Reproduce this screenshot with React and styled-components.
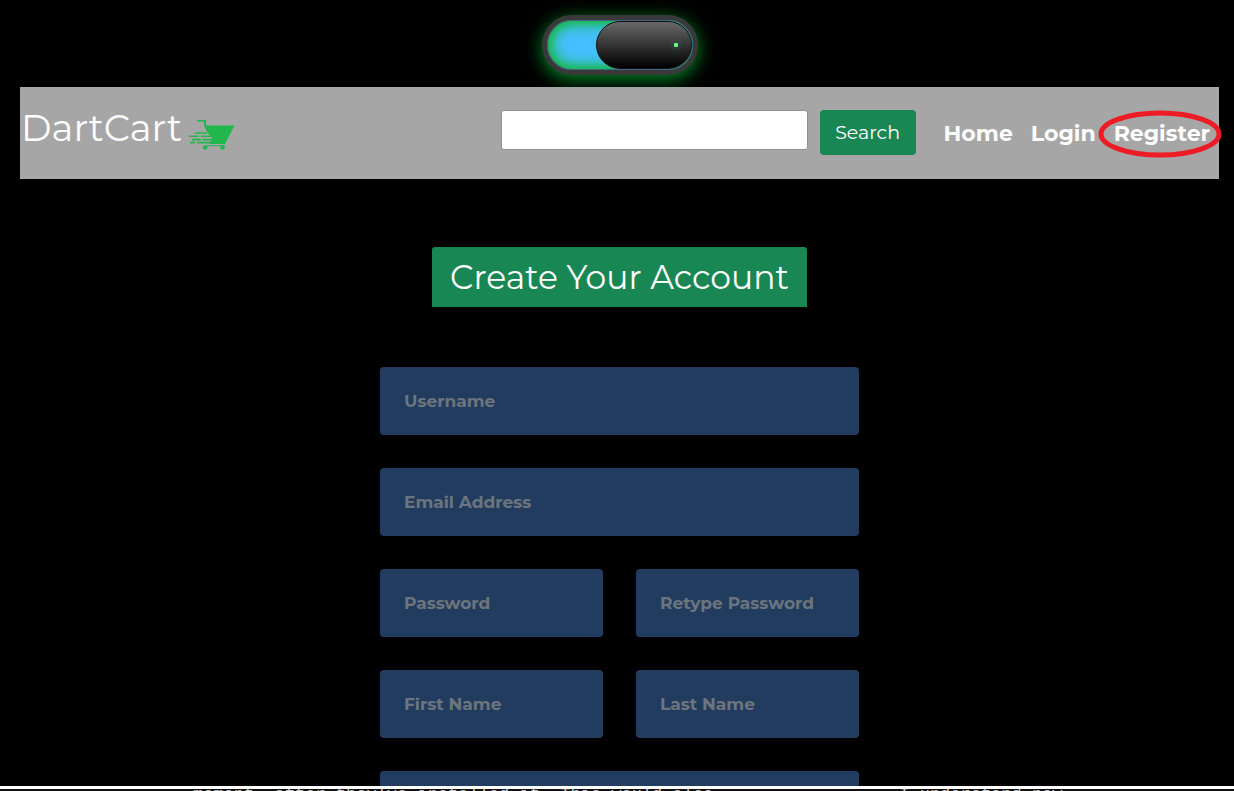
import React from "react";
import styled, { createGlobalStyle } from "styled-components";

const Global = createGlobalStyle`
  *, *::before, *::after { box-sizing: border-box; }
  body { margin: 0; background: #000; font-family: Montserrat, Inter, sans-serif; overflow: hidden; }
`;

const Page = styled.div`
  height: 100vh;
  display: flex;
  flex-direction: column;
  overflow: hidden;
`;

const Content = styled.div`
  flex: 1;
  min-height: 0;
  overflow: hidden;
  padding: 15px 15px 0 20px;
`;

const Switch = styled.label`
  display: block;
  position: relative;
  width: 156px;
  height: 60px;
  margin: 0 auto 12px;
  border-radius: 30px;
  border: 5px solid #393939;
  background: #45bfff;
  box-shadow: 0 4px 18px #008a26, inset 0 0 0 1px #41688a, inset 0 0 8px 2px #12b83c,
    inset 0 0 16px 4px #1fba55;
`;

const SwitchInput = styled.input`
  position: absolute;
  inset: 0;
  margin: 0;
  width: 100%;
  height: 100%;
  opacity: 0;
`;

const Knob = styled.span`
  position: absolute;
  top: 1px;
  right: 1px;
  bottom: 1px;
  width: 96px;
  border-radius: 24px;
  border: 1px solid #111;
  background: linear-gradient(#686868, #000);
`;

const Led = styled.span`
  position: absolute;
  top: 21px;
  right: 13px;
  width: 4px;
  height: 4px;
  border-radius: 1px;
  background: #65fb75;
  box-shadow: 0 0 6px #2d7aa5;
`;

const Header = styled.header`
  position: relative;
  z-index: 1;
  display: flex;
  align-items: flex-start;
  height: 92px;
  padding: 23px 9px 0 1px;
  background: #a6a6a6;
`;

const Brand = styled.a`
  display: flex;
  align-items: flex-start;
  gap: 7px;
  margin-right: auto;
  color: #fff;
  font-size: 37px;
  font-weight: 400;
  line-height: 36px;
  text-decoration: none;
`;

const CartSvg = styled.svg`
  width: 46px;
  height: 32px;
  margin-top: 9px;
`;

const SearchForm = styled.form`
  display: flex;
  align-items: flex-start;
  gap: 12px;
  margin-right: 28px;
`;

const SearchInput = styled.input`
  width: 307px;
  height: 40px;
  padding: 0 12px;
  border: 1px solid #8f8f9d;
  border-radius: 3px;
  background: #fff;
  font: inherit;
`;

const SearchButton = styled.button`
  width: 96px;
  height: 45px;
  padding: 0;
  border: 0;
  border-radius: 4px;
  background: #198754;
  color: #fff;
  font-family: inherit;
  font-size: 19px;
`;

const Nav = styled.nav`
  display: flex;
  gap: 18px;
`;

const NavLink = styled.a`
  position: relative;
  color: #fff;
  font-size: 22px;
  font-weight: 700;
  line-height: 48px;
  text-decoration: none;
`;

const Ring = styled.svg`
  position: absolute;
  left: -16px;
  top: 0;
  width: 124px;
  height: 48px;
`;

const Title = styled.h1`
  width: fit-content;
  margin: 68px auto 60px;
  padding: 1px 18px 0;
  border-radius: 3px 3px 0 0;
  background: #198754;
  color: #fff;
  font-size: 33px;
  font-weight: 400;
  line-height: 59px;
`;

const Form = styled.form`
  display: grid;
  grid-template-columns: 1fr 1fr;
  gap: 33px;
  width: 479px;
  margin: 0 auto;
`;

const Field = styled.input`
  grid-column: ${(p) => (p.$wide ? "1 / -1" : "auto")};
  width: 100%;
  min-width: 0;
  height: 68px;
  padding: 0 24px;
  border: 0;
  border-radius: 4px;
  background: #223c60;
  color: #fff;
  font-family: inherit;
  font-size: 17px;
  font-weight: 700;
  &::placeholder { color: #6c757d; opacity: 1; }
`;

const Strip = styled.footer`
  display: flex;
  gap: 186px;
  height: 5px;
  padding-left: 193px;
  border-top: 3px solid #fff;
  background: #111;
  color: #ccc;
  font-family: "Liberation Mono", monospace;
  font-size: 17px;
  line-height: 12px;
  overflow: hidden;
  white-space: nowrap;
`;

const fields = [
  { name: "Username", wide: true },
  { name: "Email Address", wide: true, type: "email" },
  { name: "Password", type: "password" },
  { name: "Retype Password", type: "password" },
  { name: "First Name" },
  { name: "Last Name" },
  { name: "Address", wide: true },
];

function Cart() {
  return (
    <CartSvg viewBox="0 0 46 32" aria-hidden="true">
      <g fill="#20b84d">
        <path d="M8 1h9v5.500h28.500L36 25H21l2-6-5-6L15 6.500V2.500H8z" />
        <path d="M6 13.200h12v1.600H6zM0 16.400h10v1.700H0zM12 16.400h14v1.700H12zM3 19.700h9v1.700H3zM13.500 19.700h12v1.700h-12zM1 22.800h5v1.800H1zM8 22.800h15v1.800H8z" />
        <path d="M17 26h19v1.300H19l-2 2h-2z" opacity=".8" />
        <circle cx="16" cy="28.500" r="2.200" />
        <circle cx="33.500" cy="28.500" r="2.200" />
      </g>
    </CartSvg>
  );
}

export default function App() {
  return (
    <>
      <Global />
      <Page>
        <Content>
          <Switch>
            <SwitchInput type="checkbox" role="switch" aria-label="Dark mode" defaultChecked />
            <Knob><Led /></Knob>
          </Switch>
          <Header>
            <Brand href="#">DartCart <Cart /></Brand>
            <SearchForm>
              <SearchInput type="search" aria-label="Search products" />
              <SearchButton type="button">Search</SearchButton>
            </SearchForm>
            <Nav>
              <NavLink href="#">Home</NavLink>
              <NavLink href="#">Login</NavLink>
              <NavLink href="#">
                Register
                <Ring viewBox="0 0 124 48" aria-hidden="true">
                  <ellipse cx="62" cy="24" rx="59" ry="21" fill="none" stroke="#ed1c24" strokeWidth="5" />
                </Ring>
              </NavLink>
            </Nav>
          </Header>
          <Title>Create Your Account</Title>
          <Form>
            {fields.map((f) => (
              <Field key={f.name} $wide={f.wide} type={f.type || "text"}
                placeholder={f.name === "Address" ? "" : f.name} aria-label={f.name} />
            ))}
          </Form>
        </Content>
        <Strip>
          <span>moment, after they've installed it. This would also</span>
          <span>I understand now</span>
        </Strip>
      </Page>
    </>
  );
}
